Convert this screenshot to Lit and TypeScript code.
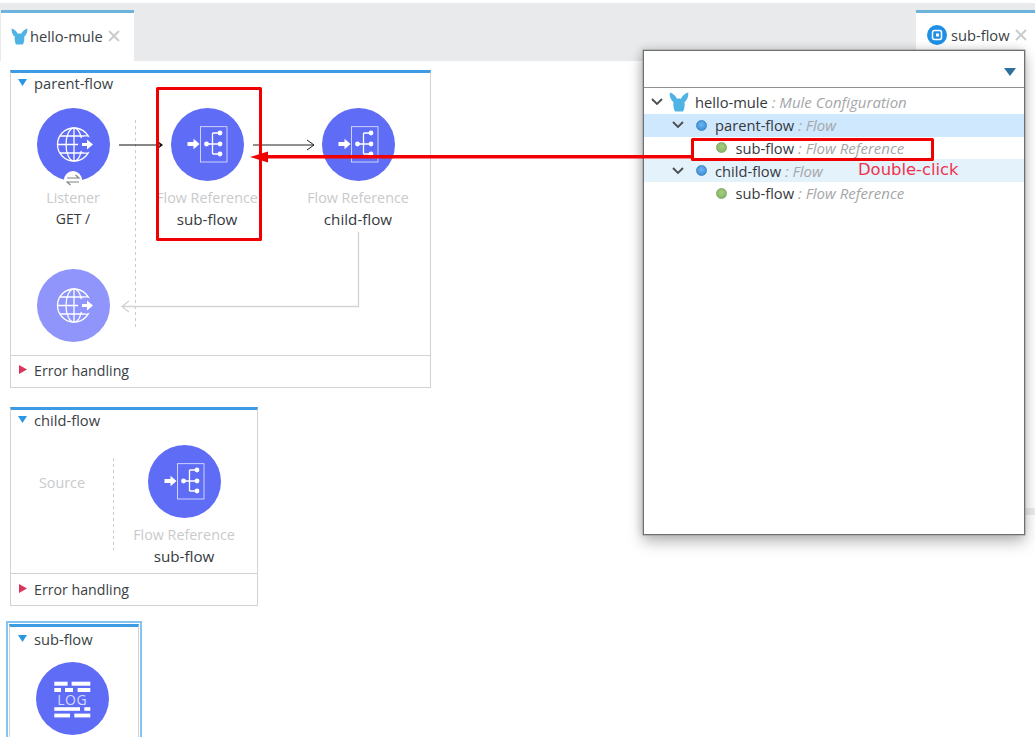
import { LitElement, html, css, svg } from "lit";
import { customElement } from "lit/decorators.js";

const mule = (cls: string) => html`<svg class=${cls} viewBox="0 0 16 16"><path fill="#4fb3e6" d="M0.6 0.4 C3 1 5.4 3 6.4 5.4 C7.4 5 8.6 5 9.6 5.4 C10.6 3 13 1 15.4 0.4 C15.8 3.4 14.6 6.4 12.4 8.2 C12.8 10.6 12.4 13.4 11.2 15.6 L4.8 15.6 C3.6 13.4 3.2 10.6 3.6 8.2 C1.4 6.4 0.2 3.4 0.6 0.4 Z"/></svg>`;

const globe = (bg: string) => svg`
  <g fill="none" stroke="#fff" stroke-width="1.3">
    <circle cx="37" cy="36.5" r="16.5"/>
    <ellipse cx="37" cy="36.5" rx="8" ry="16.5"/>
    <path d="M37 20V53M20.5 36.5H53M23 28H51M23 45H51"/>
  </g>
  <circle cx="49" cy="36.5" r="8" fill=${bg}/>
  <path fill="#fff" d="M45 35H50V31.5L56 36.5L50 41.5V38H45Z"/>`;

const flowRef = svg`
  <g fill="none" stroke="#fff">
    <rect x="29.5" y="18.7" width="26.5" height="35.3" stroke-width="0.8" stroke-opacity=".85"/>
    <path stroke-width="1.3" d="M35.5 36H49M41.5 25V46M41.5 25H49M41.5 46H49"/>
  </g>
  <g fill="#fff">
    <circle cx="35.5" cy="36" r="2.4"/><circle cx="49" cy="25" r="2.4"/><circle cx="49" cy="36" r="2.4"/><circle cx="49" cy="46" r="2.4"/>
    <path d="M16.5 34H22.5V30.8L28.5 36L22.5 41.2V38H16.5Z"/>
  </g>`;

const logIcon = svg`
  <g fill="#fff">
    <rect x="18.3" y="19.7" width="13.3" height="4"/><rect x="35.6" y="19.7" width="18.7" height="4"/>
    <rect x="18.3" y="26" width="6.7" height="4"/><rect x="29" y="26" width="8" height="4"/><rect x="41.6" y="26" width="12.7" height="4"/>
    <rect x="18.3" y="45.2" width="25.7" height="3.6"/><rect x="48.3" y="45.2" width="6" height="3.6"/>
    <rect x="18.3" y="51.6" width="15.7" height="3.8"/><rect x="38.3" y="51.6" width="16" height="3.8"/>
  </g>
  <text x="36.3" y="42.6" text-anchor="middle" fill="#d5d9ff" font-size="14" letter-spacing=".6" font-family="'Open Sans',sans-serif">LOG</text>`;

const circle = (content: unknown, light = false) => html`<svg class="circle" viewBox="0 0 73 73">
  <circle cx="36.5" cy="36.5" r="36.5" fill=${light ? "#8f95fb" : "#5f6cf5"}/>${content}</svg>`;

const close = html`<svg class="close" viewBox="0 0 12 12"><path d="M1 1L11 11M11 1L1 11" stroke="#c9cbcd" stroke-width="2" fill="none"/></svg>`;

@customElement("app-root")
export class AppRoot extends LitElement {
  static styles = css`
    :host { display: block; width: 1035px; height: 737px; position: relative; overflow: hidden; background: #fff; font-family: "Open Sans", "Noto Sans", sans-serif; font-size: 14.7px; color: #3a3f45; padding-top: 3px; box-sizing: border-box; }
    .tabbar { height: 58px; background: #e9eaeb; display: flex; justify-content: space-between; align-items: flex-end; }
    .tab { background: #fff; border-top: 3px solid #6db3dc; display: flex; align-items: center; box-sizing: border-box; height: 51px; }
    .tab.left { width: 133px; margin-left: 1px; padding-left: 10px; padding-bottom: 2px; }
    .tab.right { width: 119px; padding-left: 11px; padding-bottom: 5px; }
    .tab-mule { width: 17px; height: 17px; margin-right: 2px; }
    .tab-icon { width: 20px; height: 20px; margin-right: 4px; }
    .close { width: 12px; height: 12px; margin-left: 5px; }
    .main { padding: 9px 0 0 10px; display: flex; flex-direction: column; align-items: flex-start; }
    .card { border: 1px solid #d0d2d4; border-top: 3px solid #3d9be3; background: #fff; box-sizing: border-box; position: relative; }
    .c1 { width: 421px; height: 318px; margin-bottom: 19px; }
    .c2 { width: 248px; height: 199px; margin-bottom: 15px; }
    .sel { border: 2px solid #84c2f2; padding: 1px; margin-left: -4px; }
    .c3 { width: 130px; height: 140px; }
    .head { height: 35px; display: flex; align-items: flex-start; padding: 0 0 0 6px; line-height: 21px; box-sizing: border-box; }
    .head span { margin-left: 6px; }
    .tri { width: 11px; height: 11px; margin: 4px 0 0 0; flex: none; }
    .flow { display: grid; grid-template-columns: 124px 144px 146px; }
    .flow2 { display: grid; grid-template-columns: 102px 142px; }
    .node { display: flex; flex-direction: column; align-items: center; position: relative; }
    .node.third { margin-left: 6px; padding-left: 6px; }
    .low { padding: 39px 0 0 26px; }
    .circle { width: 73px; height: 73px; display: block; }
    .label { color: #c9cacc; line-height: 21px; margin-top: 5.5px; white-space: nowrap; font-size: 14.3px; }
    .name { color: #35393e; line-height: 22px; margin-top: .5px; font-size: 15.2px; }
    .get { font-size: 14px; }
    .badge { position: absolute; left: 50%; top: 63px; margin-left: -9px; width: 18px; height: 18px; border-radius: 50%; background: #fff; }
    .source { color: #c9cacc; line-height: 21px; padding: 27px 0 0 28px; font-size: 14.3px; }
    .foot { position: absolute; left: 0; right: 0; bottom: 0; height: 32px; border-top: 1px solid #d0d2d4; display: flex; align-items: center; padding-left: 6px; box-sizing: border-box; font-size: 14.2px; }
    .c1 .foot { padding-bottom: 2px; }
    .foot span { margin-left: 6px; }
    .tri-r { width: 11px; height: 11px; flex: none; margin-top: -3px; }
    .c3 .head { padding: 1.5px 0 0 7px; }
    .low2 { padding-left: 26px; }
    .wires { position: absolute; left: 0; top: 0; width: 1035px; height: 737px; pointer-events: none; }
    .popup { position: absolute; left: 643px; top: 50px; width: 382px; height: 485px; box-sizing: border-box; background: #fff; border: 1px solid #6e7072; box-shadow: 0 0 0 .5px #9a9c9e, 0 7px 14px rgba(0,0,0,.28), -2px -1px 8px rgba(0,0,0,.14); }
    .search { height: 37px; border-bottom: 1px solid #8d8f91; display: flex; justify-content: flex-end; align-items: center; padding: 7px 8px 0 0; box-sizing: border-box; }
    .tree { padding-top: 3.4px; }
    .row { height: 22.7px; display: flex; align-items: center; white-space: nowrap; position: relative; box-sizing: border-box; }
    .l0 { padding: 0 0 1.5px 7px; }
    .l1 { padding-left: 28px; padding-bottom: .5px; }
    .l2 { padding-left: 71.5px; padding-bottom: .5px; }
    .hi { background: #cfe8fd; }
    .hi2 { background: #e4f2fc; }
    .chev { width: 12px; height: 8px; flex: none; }
    .mule { width: 20px; height: 20px; margin: 0 6px 0 6px; flex: none; }
    .dot { width: 11px; height: 11px; box-sizing: border-box; border-radius: 50%; margin: 0 8.5px 0 11.5px; flex: none; }
    .l2 .dot { margin: 0 9px 0 0; }
    .blue { background: radial-gradient(circle at 50% 40%, #6db5ef, #2f86d6); border: 1px solid #3f86c4; }
    .green { background: radial-gradient(circle at 50% 40%, #a5cf80, #7fae5a); border: 1px solid #86a86c; }
    .t { color: #35393e; }
    .i { color: #a4a6a8; font-style: italic; font-size: 15px; }
    .dbl { position: absolute; left: 214px; top: 0; font-family: "DejaVu Sans", sans-serif; font-size: 16.4px; color: #f0324c; line-height: 22px; }
    .sliver { position: absolute; left: 1025px; top: 508px; width: 10px; height: 7px; background: #ececec; }
  `;

  private head(name: string) {
    return html`<div class="head"><svg class="tri" viewBox="0 0 11 11"><path d="M1 2H10L5.5 9Z" fill="#2a97e6"/></svg><span>${name}</span></div>`;
  }
  private foot() {
    return html`<div class="foot"><svg class="tri-r" viewBox="0 0 11 11"><path d="M2 1V10L10 5.5Z" fill="#d9345a"/></svg><span>Error handling</span></div>`;
  }
  private ref(name: string, third = false) {
    return html`<div class="node ${third ? "third" : ""}">${circle(flowRef)}<div class="label">Flow Reference</div><div class="name">${name}</div></div>`;
  }

  render() {
    const chev = html`<svg class="chev" viewBox="0 0 12 8"><path d="M1 1L6 6L11 1" fill="none" stroke="#4a4d50" stroke-width="1.8"/></svg>`;
    return html`
      <div class="tabbar">
        <div class="tab left">${mule("tab-mule")}<span>hello-mule</span>${close}</div>
        <div class="tab right">
          <svg class="tab-icon" viewBox="0 0 20 20"><circle cx="10" cy="10" r="10" fill="#1f8fe6"/><rect x="5.5" y="5.5" width="9" height="9" rx="2" fill="none" stroke="#fff" stroke-width="1.5"/><rect x="9" y="8.5" width="3" height="3" fill="#fff"/></svg>
          <span>sub-flow</span>${close}
        </div>
      </div>
      <div class="main">
        <section class="card c1">
          ${this.head("parent-flow")}
          <div class="flow">
            <div class="node">${circle(globe("#5f6cf5"))}
              <svg class="badge" viewBox="0 0 18 18"><path d="M3 7H15L11.5 4M15 11H3L6.5 14" fill="none" stroke="#808284" stroke-width="1.1"/></svg>
              <div class="label">Listener</div><div class="name get">GET /</div></div>
            ${this.ref("sub-flow")}
            ${this.ref("child-flow", true)}
          </div>
          <div class="low">${circle(globe("#8f95fb"), true)}</div>
          ${this.foot()}
        </section>
        <section class="card c2">
          ${this.head("child-flow")}
          <div class="flow2"><div class="source">Source</div>${this.ref("sub-flow")}</div>
          ${this.foot()}
        </section>
        <div class="sel">
          <section class="card c3">
            ${this.head("sub-flow")}
            <div class="low2">${circle(logIcon)}</div>
          </section>
        </div>
      </div>
      <div class="sliver"></div>
      <svg class="wires" viewBox="0 0 1035 737">
        <g fill="none">
          <path d="M135.5 120V328M113.5 458V550" stroke="#c8cacc" stroke-dasharray="3 3"/>
          <path d="M119 145H162M158 142L162 145L158 148" stroke="#111" stroke-width="1.2"/>
          <path d="M253 145H314M307 140L314 145L307 150" stroke="#222" stroke-width="1"/>
          <path d="M358.5 232V306.5H122M129 301L122 306.5L129 312" stroke="#d2d3d5" stroke-width="1.3"/>
        </g>
      </svg>
      <div class="popup">
        <div class="search"><svg width="12" height="9" viewBox="0 0 12 9"><path d="M0 0H12L6 8Z" fill="#2f6f9e"/></svg></div>
        <div class="tree">
          <div class="row l0">${chev}${mule("mule")}<span class="t">hello-mule</span><span class="i">&nbsp;: Mule Configuration</span></div>
          <div class="row l1 hi">${chev}<i class="dot blue"></i><span class="t">parent-flow</span><span class="i">&nbsp;: Flow</span></div>
          <div class="row l2"><i class="dot green"></i><span class="t">sub-flow</span><span class="i">&nbsp;: Flow Reference</span></div>
          <div class="row l1 hi2">${chev}<i class="dot blue"></i><span class="t">child-flow</span><span class="i">&nbsp;: Flow</span><span class="dbl">Double-click</span></div>
          <div class="row l2"><i class="dot green"></i><span class="t">sub-flow</span><span class="i">&nbsp;: Flow Reference</span></div>
        </div>
      </div>
      <svg class="wires" viewBox="0 0 1035 737">
        <g fill="none" stroke="#f00000" stroke-linejoin="round">
          <rect x="157.5" y="88.5" width="103" height="151" stroke-width="3"/>
          <rect x="692.5" y="139.5" width="240" height="20" stroke-width="3"/>
          <path d="M692 156.8H266" stroke-width="3.6"/>
        </g>
        <path d="M250 157L268 151.5V162.5Z" fill="#f00000"/>
      </svg>
    `;
  }
}
